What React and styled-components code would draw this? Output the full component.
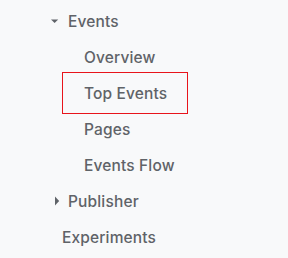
import React from "react";
import styled, { createGlobalStyle } from "styled-components";

const Global = createGlobalStyle`
  html, body { margin: 0; padding: 0; background: #f8f9fa; }
  body { font-family: Inter, Roboto, "Liberation Sans", sans-serif; }
`;

const Nav = styled.nav`
  width: 288px;
  height: 258px;
  box-sizing: border-box;
  padding: 3px 0 0 48px;
  display: flex;
  flex-direction: column;
  background: #f8f9fa;
`;

const Row = styled.div`
  position: relative;
  height: 36px;
  display: flex;
  align-items: center;
  padding-left: ${(p) => p.$indent}px;
  font-family: Inter, Roboto, sans-serif;
  font-size: 15.5px;
  font-weight: 500;
  color: #5f6368;
  letter-spacing: 0.15px;
  white-space: nowrap;
`;

const Highlight = styled.span`
  position: absolute;
  left: 14px;
  top: -3px;
  width: 126px;
  height: 42px;
  box-sizing: border-box;
  border: 1px solid #e8141b;
  pointer-events: none;
`;

const Caret = styled.svg`
  width: 16px;
  height: 16px;
  flex: none;
  margin-right: 4px;
`;

function Down() {
  return (
    <Caret viewBox="0 0 16 16">
      <path d="M3 6.5h7.2L6.6 10z" fill="#5f6368" />
    </Caret>
  );
}

function Right() {
  return (
    <Caret viewBox="0 0 16 16">
      <path d="M7 3.5v9l4.2-4.5z" fill="#5f6368" />
    </Caret>
  );
}

export default function App() {
  return (
    <>
      <Global />
      <Nav>
        <Row $indent={0}>
          <Down />
          Events
        </Row>
        <Row $indent={36}>Overview</Row>
        <Row $indent={36}>
          <Highlight />
          Top Events
        </Row>
        <Row $indent={36}>Pages</Row>
        <Row $indent={36}>Events Flow</Row>
        <Row $indent={0}>
          <Right />
          Publisher
        </Row>
        <Row $indent={14}>Experiments</Row>
      </Nav>
    </>
  );
}
